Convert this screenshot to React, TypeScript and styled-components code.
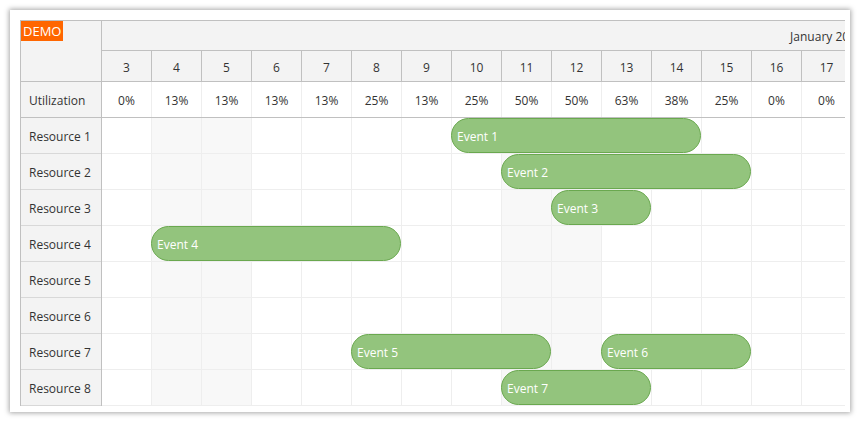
import React from "react";
import styled, { createGlobalStyle } from "styled-components";

const Global = createGlobalStyle`
  html, body { margin: 0; padding: 0; background: #fff; }
  body { font-family: "Segoe UI", "Open Sans", "Noto Sans", sans-serif; font-size: 12px; color: #333; }
`;

const DAY_W = 50;
const FIRST_DAY = 3;
const MONTH_DAYS = 29; // Jan 3 .. Jan 31
const days = Array.from({ length: 15 }, (_, i) => FIRST_DAY + i);
const weekend = (d: number) => {
  const dow = (d + 2) % 7; // Jan 4 2020 -> Saturday
  return dow === 6 || dow === 0;
};

const utilization: Record<number, string> = {
  3: "0%", 4: "13%", 5: "13%", 6: "13%", 7: "13%", 8: "25%", 9: "13%", 10: "25%",
  11: "50%", 12: "50%", 13: "63%", 14: "38%", 15: "25%", 16: "0%", 17: "0%",
};

type Ev = { text: string; start: number; end: number };
const resources: { name: string; events: Ev[] }[] = [
  { name: "Resource 1", events: [{ text: "Event 1", start: 10, end: 14 }] },
  { name: "Resource 2", events: [{ text: "Event 2", start: 11, end: 15 }] },
  { name: "Resource 3", events: [{ text: "Event 3", start: 12, end: 13 }] },
  { name: "Resource 4", events: [{ text: "Event 4", start: 4, end: 8 }] },
  { name: "Resource 5", events: [] },
  { name: "Resource 6", events: [] },
  {
    name: "Resource 7",
    events: [
      { text: "Event 5", start: 8, end: 11 },
      { text: "Event 6", start: 13, end: 15 },
    ],
  },
  { name: "Resource 8", events: [{ text: "Event 7", start: 11, end: 13 }] },
];

const Frame = styled.div`
  margin: 10px;
  width: 840px;
  height: 402px;
  box-sizing: border-box;
  padding: 10px 5px 6px 10px;
  background: #fff;
  box-shadow: 0 0 5px 1px rgba(0, 0, 0, 0.35);
`;

const Scheduler = styled.div`
  display: flex;
  width: 825px;
  height: 386px;
  box-sizing: border-box;
  border-top: 1px solid #c0c0c0;
  border-left: 1px solid #c0c0c0;
  overflow: hidden;
`;

const LeftPane = styled.div`
  flex: 0 0 80px;
  display: flex;
  flex-direction: column;
  border-right: 1px solid #c0c0c0;
  background: #f3f3f3;
`;

const Corner = styled.div`
  height: 60px;
  border-bottom: 1px solid #c0c0c0;
`;

const Demo = styled.div`
  display: inline-block;
  background: #ff6600;
  color: #fff;
  font-size: 13px;
  line-height: 20px;
  height: 20px;
  width: 42px;
  box-sizing: border-box;
  padding-left: 2px;
`;

const RowHeader = styled.div<{ $h: number; $strong?: boolean }>`
  height: ${(p) => p.$h}px;
  box-sizing: border-box;
  flex: 0 0 auto;
  display: flex;
  align-items: center;
  padding: 2px 0 0 8px;
  border-bottom: 1px solid ${(p) => (p.$strong ? "#c0c0c0" : "#d8d8d8")};
`;

const RightPane = styled.div`
  flex: 1;
  min-width: 0;
  overflow: hidden;
  display: flex;
  flex-direction: column;
`;

const Row = styled.div<{ $h: number; $line: string; $bg?: string }>`
  position: relative;
  display: flex;
  flex: 0 0 auto;
  height: ${(p) => p.$h}px;
  border-bottom: 1px solid ${(p) => p.$line};
  background: ${(p) => p.$bg || "#fff"};
`;

const MonthCell = styled.div`
  flex: 0 0 ${MONTH_DAYS * DAY_W - 1}px;
  display: flex;
  align-items: center;
  justify-content: center;
  padding-top: 1px;
  border-right: 1px solid #c0c0c0;
`;

const Cell = styled.div<{ $line: string; $bg?: string }>`
  flex: 0 0 ${DAY_W - 1}px;
  display: flex;
  align-items: center;
  justify-content: center;
  padding-top: 2px;
  box-sizing: content-box;
  height: calc(100% - 2px);
  border-right: 1px solid ${(p) => p.$line};
  background: ${(p) => p.$bg || "transparent"};
`;

const EventBar = styled.div`
  position: absolute;
  top: 0;
  height: 35px;
  box-sizing: border-box;
  border: 1px solid #6aa84f;
  border-radius: 18px;
  background: #93c47d;
  color: #fff;
  display: flex;
  align-items: center;
  padding: 1px 0 0 5px;
  white-space: nowrap;
`;

export default function App() {
  return (
    <>
      <Global />
      <Frame>
        <Scheduler>
          <LeftPane>
            <Corner>
              <Demo>DEMO</Demo>
            </Corner>
            <RowHeader $h={36} $strong>
              Utilization
            </RowHeader>
            {resources.map((r) => (
              <RowHeader key={r.name} $h={36}>
                {r.name}
              </RowHeader>
            ))}
          </LeftPane>
          <RightPane>
            <Row $h={29} $line="#c0c0c0" $bg="#f3f3f3">
              <MonthCell>January 2020</MonthCell>
            </Row>
            <Row $h={30} $line="#c0c0c0" $bg="#f3f3f3">
              {days.map((d) => (
                <Cell key={d} $line="#c0c0c0">
                  {d}
                </Cell>
              ))}
            </Row>
            <Row $h={35} $line="#c0c0c0">
              {days.map((d) => (
                <Cell key={d} $line="#eeeeee">
                  {utilization[d]}
                </Cell>
              ))}
            </Row>
            {resources.map((r) => (
              <Row key={r.name} $h={35} $line="#eeeeee">
                {days.map((d) => (
                  <Cell key={d} $line="#eeeeee" $bg={weekend(d) ? "#f8f8f8" : undefined} />
                ))}
                {r.events.map((e) => (
                  <EventBar
                    key={e.text}
                    style={{
                      left: (e.start - FIRST_DAY) * DAY_W - 1,
                      width: (e.end - e.start + 1) * DAY_W,
                    }}
                  >
                    {e.text}
                  </EventBar>
                ))}
              </Row>
            ))}
          </RightPane>
        </Scheduler>
      </Frame>
    </>
  );
}
